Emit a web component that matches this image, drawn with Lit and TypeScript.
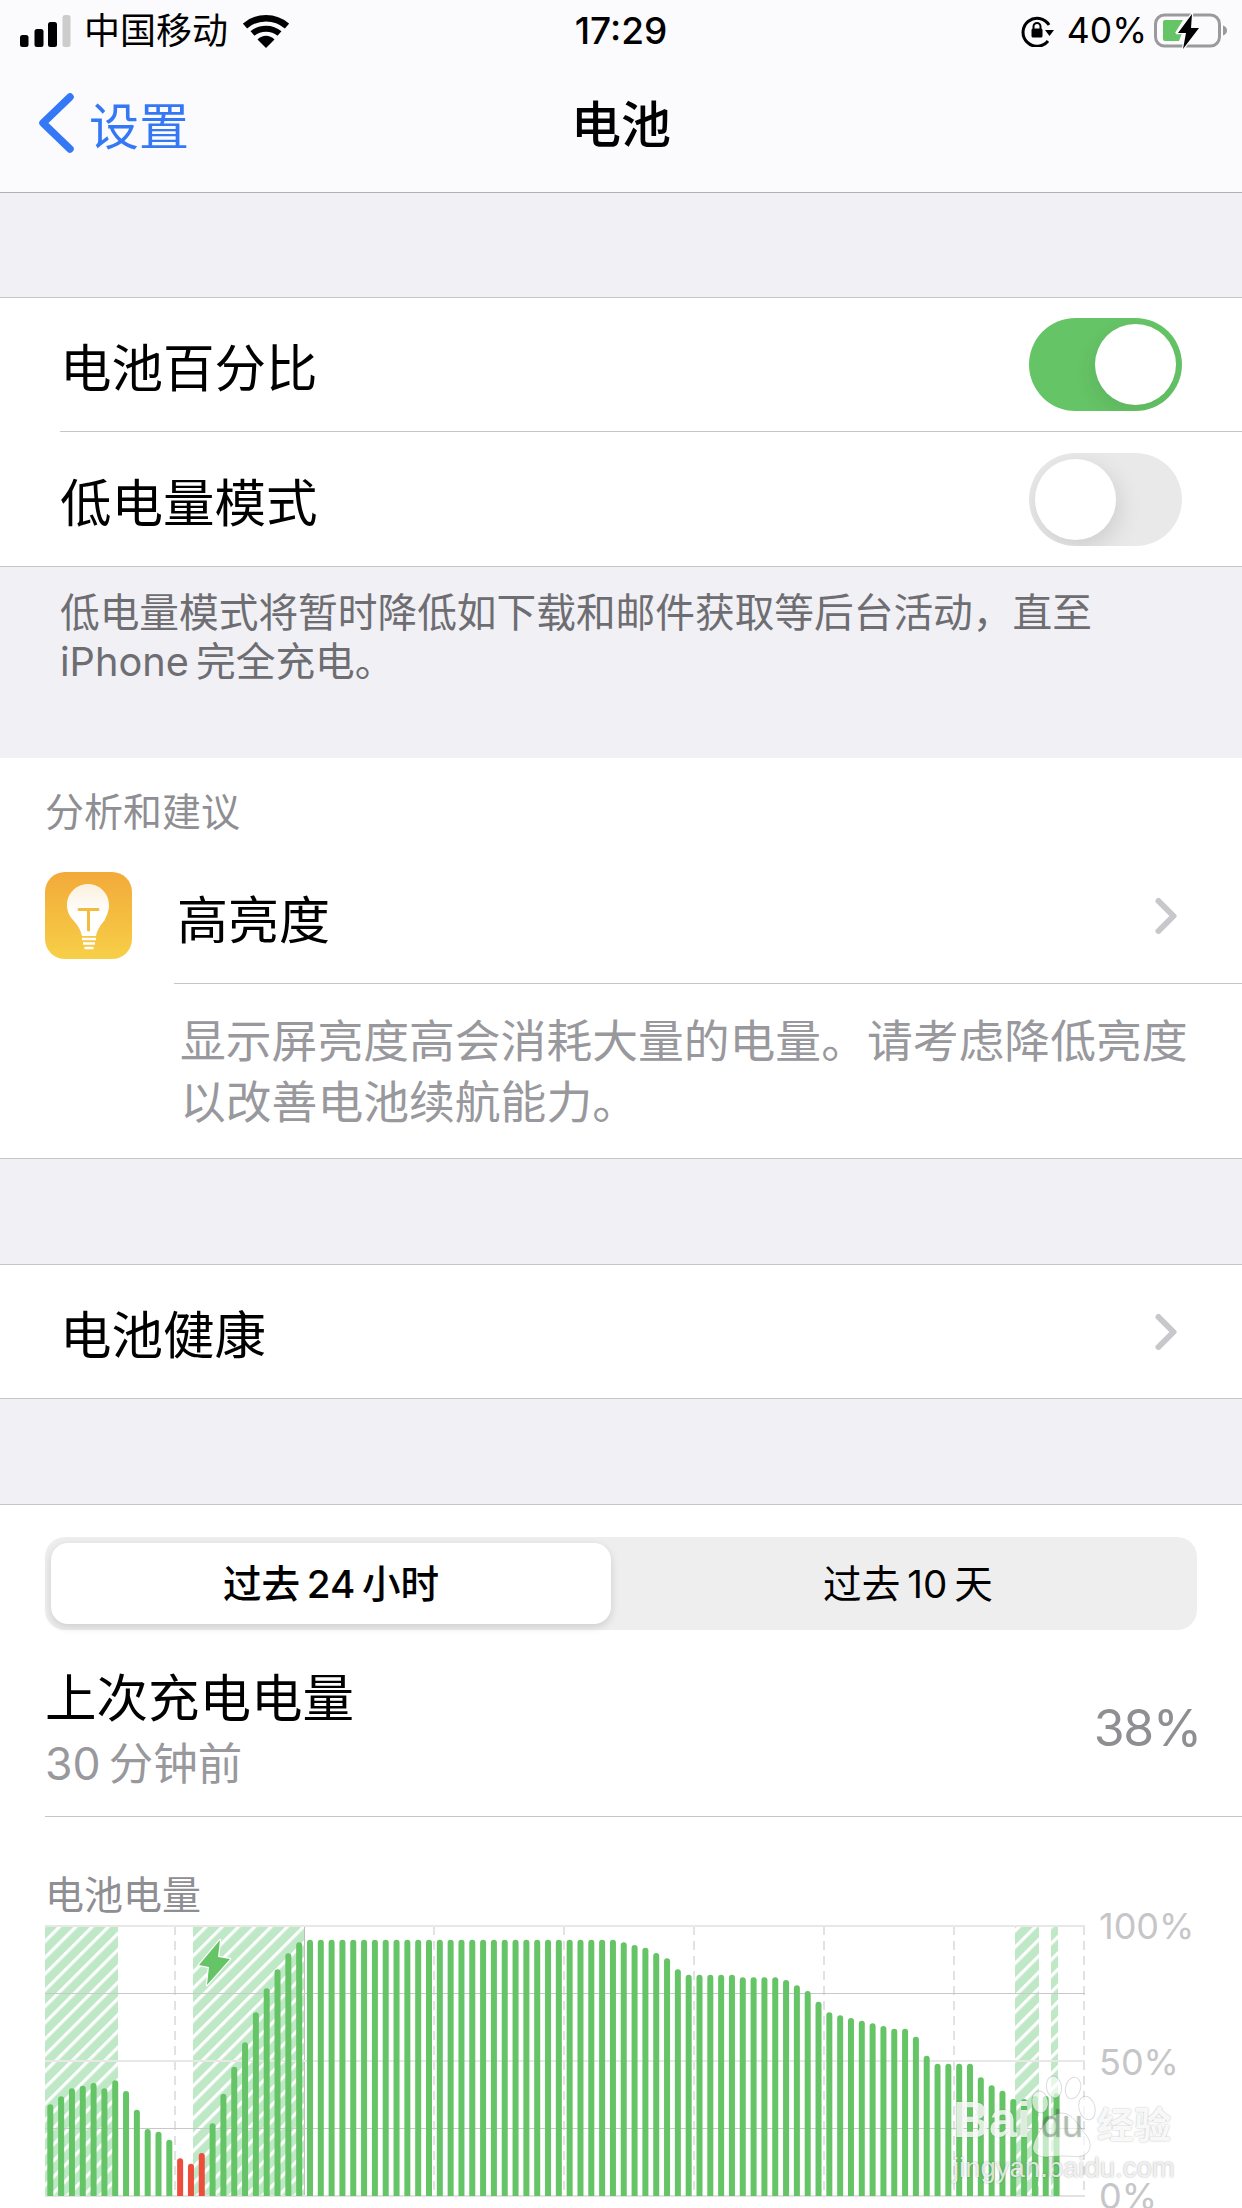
import { LitElement, html, css, svg } from "lit";
import { customElement } from "lit/decorators.js";

const GREEN = "#65c466";
const RED = "#ed4e3c";
const tops = [
  793,769,745,737,729,745,721,753,809,867,875,899,955,971,939,850,761,680,607,517,445,388,340,307,
  ...Array(29).fill(299),
  307,315,323,339,355,388,404,404,404,404,404,412,412,412,412,420,436,453,485,517,526,534,542,550,558,566,566,590,647,671,671,671,671,712,736,752,777,777,768,768,760,
];
const hatches: [number, number][] = [[45,118],[193,304],[1015,1039],[1051,1058]];
const dashes = [175,434,564,694,824,954,1084];

@customElement("app-root")
export class AppRoot extends LitElement {
  static styles = css`
    :host { display: block; width: 1242px; height: 2208px; overflow: hidden; position: relative; background: #fff;
      font-family: Inter, "Noto Sans CJK SC", sans-serif; color: #000; }
    .top { height: 192px; background: #fbfbfd; border-bottom: 1px solid #b2b2b5; display: flex; flex-direction: column; }
    .status { height: 62px; display: grid; grid-template-columns: 1fr auto 1fr; align-items: center; }
    .status svg { display: block; }
    .sleft { display: flex; align-items: center; padding-left: 20px; }
    .carrier { font-size: 36px; margin-left: 13px; line-height: 62px; }
    .wifi { margin-left: 15px; }
    .time { font-size: 37px; font-weight: 500; line-height: 62px; }
    .sright { display: flex; align-items: center; justify-content: flex-end; padding-right: 14px; }
    .pct { font-size: 35.5px; margin: 0 7px 0 12px; line-height: 62px; }
    .nav { flex: 1; display: grid; grid-template-columns: 1fr auto 1fr; align-items: center; padding-bottom: 8px; }
    .back { display: flex; align-items: center; padding-left: 38px; color: #3478f6; font-size: 50px; gap: 14px; }
    .title { font-size: 50px; font-weight: 500; line-height: 60px; margin-top: 3px; }
    .gap { height: 104px; background: #f0f0f5; }
    .gap.wide { height: 105px; }
    .group { background: #fff; border-top: 1px solid #c6c6c8; border-bottom: 1px solid #c6c6c8; }
    .row { display: flex; align-items: center; justify-content: space-between; height: 134px; padding: 0 60px; font-size: 51.5px; }
    .row.first { height: 133px; }
    .sep { height: 1px; background: #c6c6c8; margin-left: 60px; }
    .toggle { width: 153px; height: 93px; border-radius: 47px; position: relative; overflow: hidden; }
    .toggle.on { background: #65c466; }
    .toggle.off { background: #e9e9ea; }
    .knob { position: absolute; top: 6px; width: 81px; height: 81px; border-radius: 50%; background: #fff; }
    .on .knob { left: 66px; box-shadow: -3px 8px 20px rgba(0,0,0,.08); }
    .off .knob { left: 6px; box-shadow: 3px 8px 24px rgba(0,0,0,.12); }
    .note { height: 191px; box-sizing: border-box; background: #f0f0f5; padding: 22px 60px 0; font-size: 39.7px; line-height: 49px; color: #6d6d72; }
    .sugg { background: #fff; height: 401px; box-sizing: border-box; border-bottom: 1px solid #c6c6c8; }
    .sugg-h { font-size: 39px; line-height: 50px; color: #8e8e93; padding: 29px 0 0 45px; height: 79px; box-sizing: border-box; }
    .sugg-row { display: flex; align-items: flex-start; height: 146px; padding: 35px 62px 0 45px; box-sizing: border-box; }
    .bulb { width: 87px; height: 87px; border-radius: 20px; background: linear-gradient(#f2aa3a, #f7cf47); flex: none; }
    .sugg-t { font-size: 51px; line-height: 70px; margin-left: 45px; flex: 1; padding-top: 14px; }
    .chev { flex: none; display: block; }
    .sugg-row .chev { margin-top: 24px; }
    .sugg-sep { height: 1px; background: #c6c6c8; margin-left: 174px; }
    .sugg-d { font-size: 45.8px; line-height: 61px; color: #98989d; padding: 27px 0 0 180px; white-space: nowrap; }
    .health { height: 133px; display: flex; align-items: center; justify-content: space-between; padding: 0 62px 0 60px; font-size: 51.5px; }
    .bottom { background: #fff; border-top: 1px solid #c6c6c8; position: relative; }
    .seg { margin: 32px 45px 0; height: 93px; background: #eeeeef; border-radius: 20px; display: flex; padding: 6px; box-sizing: border-box; }
    .seg > div { flex: 1; display: flex; align-items: center; justify-content: center; font-size: 38.6px; white-space: pre; padding-bottom: 5px; box-sizing: border-box; }
    .seg .sel { flex: none; width: 560px; background: #fff; border-radius: 17px; font-weight: 500; box-shadow: 0 3px 8px rgba(0,0,0,.14); }
    .seg .rest { padding-left: 14px; }
    .last { display: flex; justify-content: space-between; align-items: center; margin: 32px 45px 0; height: 132px; }
    .last-a { font-size: 51.5px; line-height: 72px; }
    .last-b { font-size: 44.5px; line-height: 60px; color: #98989d; }
    .last-v { font-size: 50px; letter-spacing: -1.2px; color: #8e8e93; margin-right: -4px; }
    .divider { height: 1px; background: #c6c6c8; margin: 22px 0 0 45px; }
    .chart-h { font-size: 39px; line-height: 50px; color: #8e8e93; padding: 53px 0 0 45px; height: 103px; box-sizing: border-box; }
    .chart { display: block; overflow: visible; }
    .axis { font-size: 36px; fill: #c6c6c8; font-family: Inter, sans-serif; }
    .wm { position: absolute; left: 950px; top: 2075px; width: 240px; height: 108px; }
    .wm-brand { position: absolute; left: 3px; top: 15px; display: flex; align-items: baseline; font-family: "Liberation Sans", sans-serif; font-weight: 700; font-size: 50px; line-height: 60px; color: rgba(255,255,255,.8); text-shadow: 0 0 2px rgba(0,0,0,.15); }
    .wm-du { font-size: 38px; font-weight: 400; margin-left: 10px; color: rgba(60,110,70,.3); }
    .wm-cn { position: absolute; left: 147px; top: 27px; font-size: 37px; line-height: 48px; font-weight: 700; color: rgba(255,255,255,.92); text-shadow: 0 0 2px rgba(0,0,0,.3); }
    .wm-url { position: absolute; left: 3px; top: 78px; font-size: 27.5px; line-height: 30px; color: rgba(255,255,255,.8); text-shadow: 0 0 2px rgba(0,0,0,.35); font-family: "Liberation Sans", sans-serif; }
    .wm-paw { position: absolute; left: 0; top: 0; }
  `;

  private chevron() {
    return html`<svg class="chev" width="26" height="40" viewBox="0 0 26 40"><path d="M4.5 5l15 15-15 15" fill="none" stroke="#c7c7cc" stroke-width="6" stroke-linecap="round" stroke-linejoin="round"/></svg>`;
  }

  private chart() {
    const bottom = 2196;
    return html`<svg class="chart" width="1242" height="288" viewBox="0 1920 1242 288">
      <defs>
        <pattern id="hatch" width="11.5" height="11.5" patternUnits="userSpaceOnUse" patternTransform="rotate(45)">
          <rect width="11.5" height="11.5" fill="#bfe8c6"/>
          <rect x="0" y="0" width="3.2" height="11.5" fill="#fff"/>
        </pattern>
      </defs>
      ${hatches.map(([a, b]) => svg`<rect x=${a} y="1926" width=${b - a} height="270" fill="url(#hatch)"/>`)}
      ${dashes.map((x) => svg`<line x1=${x} x2=${x} y1="1926" y2="2196" stroke="#d9d9dc" stroke-width="1.5" stroke-dasharray="9 6"/>`)}
      <line x1="304.5" x2="304.5" y1="1926" y2="2196" stroke="#bdbdbf" stroke-width="1"/>
      <rect x="45" y="1925" width="1040" height="2" fill="#e8e8e8"/>
      <rect x="45" y="1993" width="1040" height="1" fill="#c8c8ca"/>
      <rect x="45" y="2060" width="1040" height="2" fill="#e8e8e8"/>
      <rect x="45" y="2128" width="1040" height="1" fill="#c8c8ca"/>
      <rect x="45" y="2195" width="1040" height="2" fill="#e2e2e2"/>
      ${tops.map((t, i) => {
        const y = 1840 + t / 3;
        const x = 50.3 + i * 10.82 - 3;
        const red = i >= 12 && i <= 14;
        return svg`<path d="M${x} ${bottom}V${y + 3}a3 3 0 0 1 6 0V${bottom}z" fill=${red ? RED : GREEN}/>`;
      })}
      <path d="M220 1940L199 1965L209 1967L207 1985L230 1959L218 1957Z" fill=${GREEN} stroke="#fff" stroke-width="2.5" stroke-linejoin="round" paint-order="stroke"/>
      <text class="axis" x="1099" y="1939">100%</text>
      <text class="axis" x="1099" y="2075">50%</text>
      <text class="axis" x="1099" y="2209">0%</text>
    </svg>`;
  }

  render() {
    return html`
      <div class="top">
        <div class="status">
          <div class="sleft">
            <svg width="51" height="34" viewBox="0 0 51 34">
              <rect x="0" y="21" width="8.5" height="12" rx="2.5" fill="#000"/>
              <rect x="14.5" y="15" width="9" height="18" rx="2.5" fill="#000"/>
              <rect x="28" y="8" width="9" height="25" rx="2.5" fill="#000"/>
              <rect x="42.5" y="1" width="8" height="32" rx="2.5" fill="#ccc"/>
            </svg>
            <span class="carrier">中国移动</span>
            <svg class="wifi" width="46" height="34" viewBox="0 0 46 34">
              <path d="M2 12C14 1.5 32 1.5 44 12" fill="none" stroke="#000" stroke-width="6.5"/>
              <path d="M9.5 19.5C17 13 29 13 36.5 19.5" fill="none" stroke="#000" stroke-width="6"/>
              <path d="M14.5 25.5C19.5 20.5 26.5 20.5 31.5 25.5L23 34Z" fill="#000"/>
            </svg>
          </div>
          <div class="time">17:29</div>
          <div class="sright">
            <svg width="34" height="32" viewBox="0 0 34 32">
              <path d="M28 10A14 14 0 1 0 27 26" fill="none" stroke="#000" stroke-width="3"/>
              <path d="M24 15h9l-4.5 6z" fill="#000"/>
              <rect x="10.5" y="13.5" width="11" height="9" rx="1.5" fill="#000"/>
              <path d="M12.5 14v-2.5a3.5 3.5 0 0 1 7 0V14" fill="none" stroke="#000" stroke-width="2"/>
            </svg>
            <span class="pct">40%</span>
            <svg width="74" height="36" viewBox="0 0 74 36">
              <rect x="1.5" y="2" width="64" height="31" rx="9" fill="none" stroke="#9a9a9c" stroke-width="3"/>
              <path d="M69 12.5c2.5 .8 4 2.6 4 5s-1.5 4.2-4 5z" fill="#9a9a9c"/>
              <path d="M9 9a2 2 0 0 1 2-2h18L21 20h7l-3 8H11a2 2 0 0 1-2-2z" fill=${GREEN}/>
              <path d="M38 1L24 20h8l-3 16L45 15h-8z" fill="#000" stroke="#fbfbfd" stroke-width="2.5" paint-order="stroke"/>
            </svg>
          </div>
        </div>
        <div class="nav">
          <div class="back">
            <svg width="37" height="62" viewBox="0 0 37 62"><path d="M32 5L5 31l27 26" fill="none" stroke="#3478f6" stroke-width="7.5" stroke-linecap="round" stroke-linejoin="round"/></svg>
            <span>设置</span>
          </div>
          <div class="title">电池</div>
          <div></div>
        </div>
      </div>
      <div class="gap"></div>
      <div class="group">
        <div class="row first"><span>电池百分比</span><div class="toggle on"><div class="knob"></div></div></div>
        <div class="sep"></div>
        <div class="row"><span>低电量模式</span><div class="toggle off"><div class="knob"></div></div></div>
      </div>
      <div class="note">低电量模式将暂时降低如下载和邮件获取等后台活动，直至<br />iPhone\u2009完全充电。</div>
      <div class="sugg">
        <div class="sugg-h">分析和建议</div>
        <div class="sugg-row">
          <svg class="bulb" viewBox="0 0 87 87">
            <defs><linearGradient id="bg" x1="0" y1="0" x2="0" y2="1"><stop offset="0" stop-color="#faf0dc"/><stop offset=".55" stop-color="#fff"/></linearGradient></defs>
            <path d="M43 12C31.4 12 22 21.4 22 33c0 7 3 11.5 6.5 15.5C32 52.5 35.5 57 37 64h14c1.5-7 5-11.5 8.5-15.5C61 44.5 64 40 64 33 64 21.4 54.6 12 43 12z" fill="url(#bg)"/>
            <path d="M34 37.5h19M43.5 37.5V58" fill="none" stroke="#f3bb3f" stroke-width="3" stroke-linecap="round"/>
            <path d="M37 67h14M38 71.5h12M39.5 76h9" fill="none" stroke="#fff" stroke-width="2.5"/>
          </svg>
          <div class="sugg-t">高亮度</div>
          ${this.chevron()}
        </div>
        <div class="sugg-sep"></div>
        <div class="sugg-d">显示屏亮度高会消耗大量的电量。请考虑降低亮度<br />以改善电池续航能力。</div>
      </div>
      <div class="gap wide"></div>
      <div class="group"><div class="health"><span>电池健康</span>${this.chevron()}</div></div>
      <div class="gap wide"></div>
      <div class="bottom">
        <div class="seg">
          <div class="sel">过去\u200924\u2009小时</div>
          <div class="rest">过去\u200910\u2009天</div>
        </div>
        <div class="last">
          <div><div class="last-a">上次充电电量</div><div class="last-b">30\u2009分钟前</div></div>
          <div class="last-v">38%</div>
        </div>
        <div class="divider"></div>
        <div class="chart-h">电池电量</div>
        ${this.chart()}
      </div>
      <div class="wm">
        <svg class="wm-paw" width="240" height="108" viewBox="0 0 240 108">
          <g fill="rgba(255,255,255,.62)" stroke="rgba(0,0,0,.14)" stroke-width="1">
            <ellipse cx="90" cy="27" rx="8" ry="11" transform="rotate(-10 90 27)"/>
            <ellipse cx="104" cy="12" rx="7.5" ry="11" transform="rotate(-10 104 12)"/>
            <ellipse cx="123" cy="13" rx="7.5" ry="11" transform="rotate(15 123 13)"/>
            <ellipse cx="137" cy="33" rx="8" ry="12" transform="rotate(-15 137 33)"/>
            <path d="M85 65C92 50 102 38 112 38c10 0 16 12 24 22 5 6 6 14 0 19-5 4-12 2-24 2-11 0-20 3-26-2-5-4-3-9-1-14z"/>
          </g>
        </svg>
        <div class="wm-brand"><span>Bai</span><span class="wm-du">du</span></div>
        <div class="wm-cn">经验</div>
        <div class="wm-url">jingyan.baidu.com</div>
      </div>
    `;
  }
}
